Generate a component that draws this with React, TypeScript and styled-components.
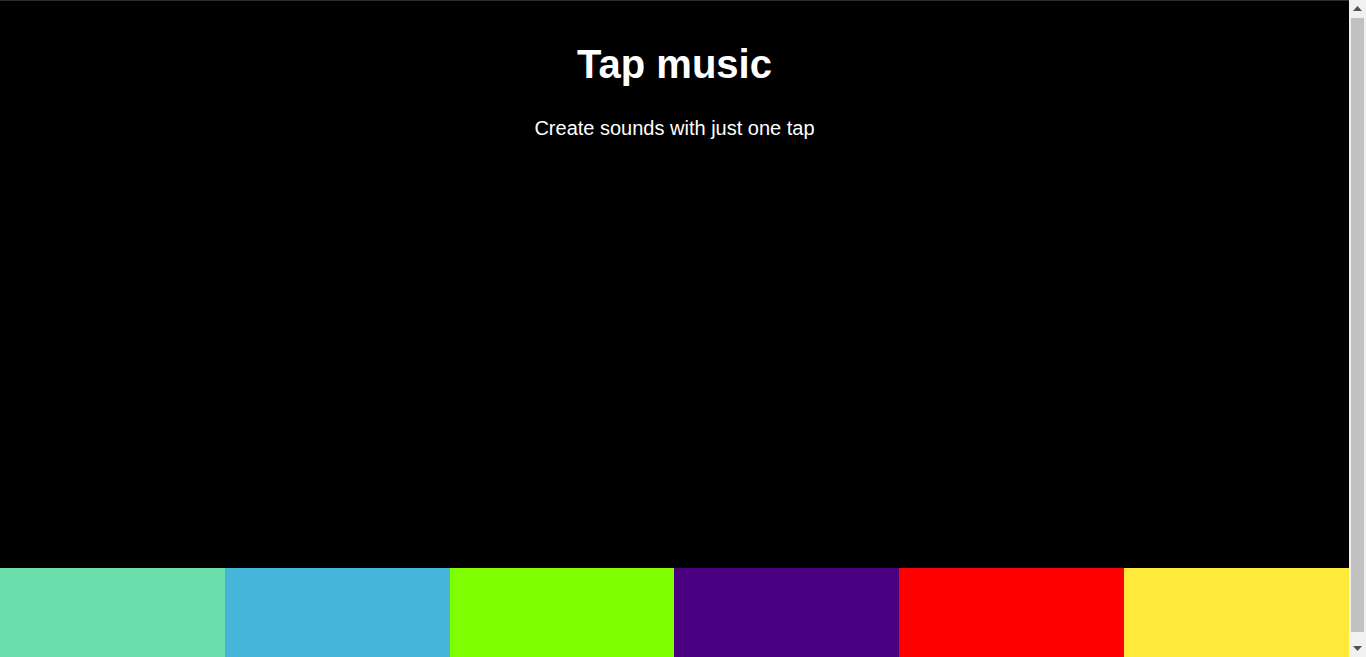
import React from "react";
import styled, { createGlobalStyle } from "styled-components";

const GlobalStyle = createGlobalStyle`
  html, body {
    margin: 0;
    padding: 0;
    background: #000;
    overflow: hidden;
  }
  body {
    font-family: "Liberation Sans", Arial, sans-serif;
  }
`;

const Window = styled.div`
  display: flex;
  height: 100vh;
  overflow: hidden;
`;

const Page = styled.main`
  flex: 1;
  min-width: 0;
  height: 667px;
  display: flex;
  flex-direction: column;
  color: #fff;
  border-top: 1px solid #2b2b2b;
`;

const Header = styled.header`
  flex: 1;
  display: flex;
  flex-direction: column;
  align-items: center;
  padding-top: 40px;
`;

const Title = styled.h1`
  margin: 0;
  font-size: 40px;
  font-weight: 700;
  line-height: 46px;
`;

const Subtitle = styled.p`
  margin: 30px 0 0;
  font-size: 20px;
  line-height: 23px;
`;

const Pads = styled.div`
  display: flex;
  height: 100px;
`;

const Pad = styled.div<{ $color: string }>`
  flex: 1;
  background: ${(p) => p.$color};
  cursor: pointer;
`;

const ScrollBar = styled.aside`
  width: 17px;
  flex-shrink: 0;
  display: flex;
  flex-direction: column;
  background: #f1f1f1;
`;

const ScrollButton = styled.div`
  height: 17px;
  display: flex;
  align-items: center;
  justify-content: center;
`;

const Track = styled.div`
  flex: 1;
  display: flex;
  flex-direction: column;
  padding: 1px 2px 8px;
`;

const Thumb = styled.div`
  flex: 1;
  background: #c1c1c1;
`;

const Arrow = ({ down }: { down?: boolean }) => (
  <svg width="9" height="5" viewBox="0 0 9 5">
    <path d={down ? "M0 0H9L4.5 5Z" : "M0 5H9L4.5 0Z"} fill="#505050" />
  </svg>
);

const colors = ["#6adeaa", "#45b5da", "#80ff00", "#4b0082", "#ff0000", "#ffe93b"];

export default function App() {
  return (
    <>
      <GlobalStyle />
      <Window>
        <Page>
          <Header>
            <Title>Tap music</Title>
            <Subtitle>Create sounds with just one tap</Subtitle>
          </Header>
          <Pads>
            {colors.map((c) => (
              <Pad key={c} $color={c} />
            ))}
          </Pads>
        </Page>
        <ScrollBar>
          <ScrollButton>
            <Arrow />
          </ScrollButton>
          <Track>
            <Thumb />
          </Track>
          <ScrollButton>
            <Arrow down />
          </ScrollButton>
        </ScrollBar>
      </Window>
    </>
  );
}
